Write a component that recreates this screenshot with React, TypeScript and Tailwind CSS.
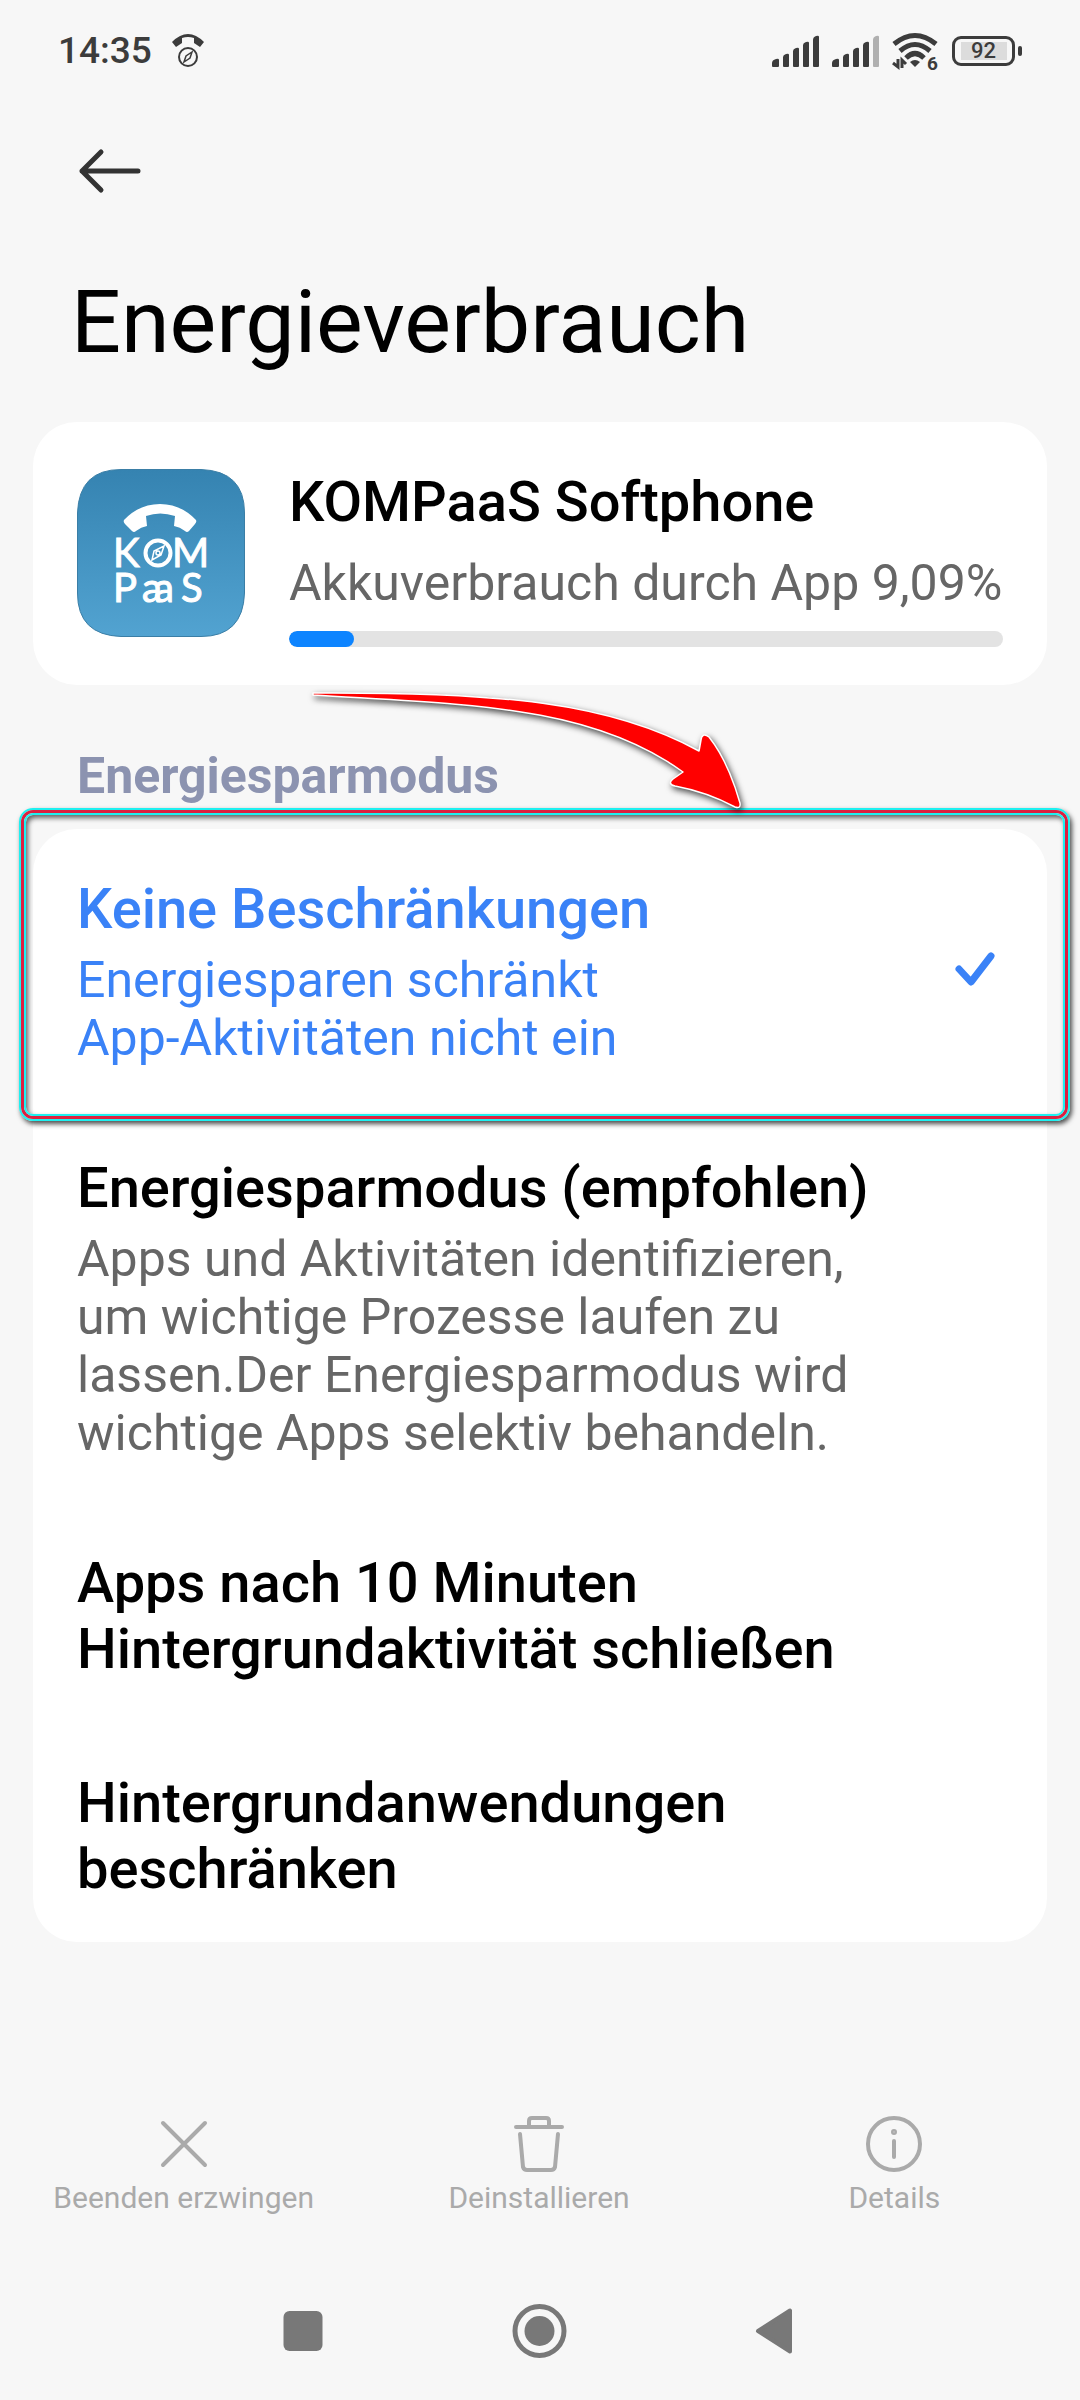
import type { ReactNode } from "react";

interface ModeOption {
  id: string;
  title: string;
  description?: string;
}

const OPTIONS: ModeOption[] = [
  {
    id: "none",
    title: "Keine Beschränkungen",
    description: "Energiesparen schränkt App-Aktivitäten nicht ein",
  },
  {
    id: "saver",
    title: "Energiesparmodus (empfohlen)",
    description:
      "Apps und Aktivitäten identifizieren, um wichtige Prozesse laufen zu lassen.Der Energiesparmodus wird wichtige Apps selektiv behandeln.",
  },
  { id: "close", title: "Apps nach 10 Minuten Hintergrundaktivität schließen" },
  { id: "restrict", title: "Hintergrundanwendungen beschränken" },
];

const SELECTED_ID = "none";
const USAGE_PERCENT = 9.09;

function SignalIcon({ weak = false }: { weak?: boolean }) {
  return (
    <svg aria-hidden="true" className="h-8 w-12" fill="#3c3c3c" viewBox="0 0 48 32">
      <path d="M0 31v-3q0-3 4-4q3-1 3 1v6q0 1-1 1H1q-1 0-1-1z" />
      <path d="M11 31V22q0-2 3-3q3-1 3 1v11q0 1-1 1h-4q-1 0-1-1z" />
      <path d="M21 31V16q0-2 3-3q3-1 3 1v17q0 1-1 1h-4q-1 0-1-1z" />
      <path d="M31 31V10q0-2 3-3q3-1 3 1v23q0 1-1 1h-4q-1 0-1-1z" />
      <path
        d="M41 31V5q0-3 3-4q3-1 3 1v29q0 1-1 1h-4q-1 0-1-1z"
        fill={weak ? "#b0b0b0" : "#3c3c3c"}
      />
    </svg>
  );
}

function WifiIcon() {
  return (
    <svg aria-hidden="true" className="h-10 w-12 overflow-visible" fill="none" viewBox="0 0 48 40">
      <g stroke="#3c3c3c" strokeWidth="5">
        <path d="M2 13Q23-4 44 13" />
        <path d="M8 20Q23 7 38 20" />
        <path d="M14 27Q23 18 32 27" />
      </g>
      <path d="M18 31q5-4 10 0l-5 5z" fill="#3c3c3c" />
      <path d="M6 28v8l-5-4M10 37v-8l4 4" stroke="#3c3c3c" strokeWidth="3" />
      <text
        fill="#3c3c3c"
        fontFamily="Roboto, sans-serif"
        fontSize="19"
        fontWeight="700"
        x="35"
        y="39"
      >
        6
      </text>
    </svg>
  );
}

function StatusBar() {
  return (
    <header className="flex h-[102px] items-center justify-between px-[58px] text-[#3c3c3c]">
      <div className="flex items-center gap-5">
        <span className="text-[37px] leading-[44px] font-medium">14:35</span>
        <svg aria-hidden="true" className="h-9 w-8" viewBox="0 0 32 36">
          <path d="M0 9Q16-7 32 9l-4 5-6-4V5q-6-2-12 0v5l-6 4z" fill="#3c3c3c" />
          <circle cx="16" cy="24" fill="none" r="9" stroke="#3c3c3c" strokeWidth="2" />
          <path
            d="M20 19l-2 6-6 4 2-6z"
            fill="none"
            stroke="#3c3c3c"
            strokeWidth="1.5"
          />
        </svg>
      </div>
      <div className="flex items-center gap-3">
        <SignalIcon />
        <SignalIcon weak />
        <WifiIcon />
        <div className="flex items-center gap-[3px]">
          <div className="flex h-[30px] w-[63px] items-center justify-center rounded-[9px] border-3 border-[#3c3c3c] px-1">
            <span className="w-[46px] bg-[#dcdcdc] text-center text-[22px] leading-[18px] font-medium">
              92
            </span>
          </div>
          <span className="h-[10px] w-1 rounded-sm bg-[#3c3c3c]" />
        </div>
      </div>
    </header>
  );
}

function AppIcon() {
  return (
    <svg aria-hidden="true" className="size-[168px] flex-none" viewBox="0 0 168 168">
      <defs>
        <linearGradient id="app-icon" x1="0" x2="0" y1="0" y2="1">
          <stop offset="0" stopColor="#3583b1" />
          <stop offset="1" stopColor="#52a3d1" />
        </linearGradient>
      </defs>
      <path
        d="M44 0.500H124Q167.500 2 167.500 44V124Q166 167.500 124 167.500H44Q0.500 166 0.500 124V44Q2 0.500 44 0.500Z"
        fill="url(#app-icon)"
        stroke="#3a7ea6"
      />
      <path
        d="M47 51Q62 35 83 35T119 51q1 2-1 4l-6 7q-2 2-4 0-5-4-11-5l1-10q-15-5-29 0l1 10q-6 1-11 5-2 2-4 0l-7-7q-2-2-1-4z"
        fill="#fff"
      />
      <g
        fill="#fff"
        fontFamily="Lato, sans-serif"
        fontSize="40"
        stroke="#fff"
        strokeWidth="1"
      >
        <text x="36" y="98">K</text>
        <text x="95" y="98">M</text>
        <text x="36" y="133">P</text>
        <text x="65" y="133">a</text>
        <text x="77" y="133">a</text>
        <text x="104" y="133">S</text>
      </g>
      <circle cx="81" cy="84" fill="none" r="12.5" stroke="#fff" strokeWidth="4" />
      <path
        d="M87 77l-3 9-9 5 2-9zM79 84a2 2 0 1 0 4 0a2 2 0 1 0-4 0"
        fill="none"
        stroke="#fff"
        strokeWidth="1.500"
      />
    </svg>
  );
}

function UsageCard() {
  return (
    <section className="flex items-start gap-11 rounded-[44px] bg-white px-11 pt-[47px] pb-[38px]">
      <AppIcon />
      <div className="flex flex-1 flex-col gap-[19px]">
        <h2 className="text-[56px] leading-[66px] font-medium">KOMPaaS Softphone</h2>
        <p className="text-[50px] leading-[58px] whitespace-nowrap text-[#666]">
          Akkuverbrauch durch App 9,09%
        </p>
        <div className="h-4 overflow-hidden rounded-full bg-[#e3e3e3]">
          <div
            className="h-full rounded-full bg-[#0d84ff]"
            style={{ width: `${USAGE_PERCENT}%` }}
          />
        </div>
      </div>
    </section>
  );
}

function PointerArrow() {
  return (
    <svg
      aria-hidden="true"
      className="pointer-events-none absolute -top-[164px] left-[257px] z-10 h-[160px] w-[470px] overflow-visible drop-shadow-[2px_3px_3px_rgba(0,0,0,0.7)]"
      viewBox="290 665 470 160"
    >
      <path
        d="M313 693C500 692 610 702 699 751L701 740Q702 732 709 737Q728 761 740 803Q741 809 735 807Q707 792 675 786Q667 784 673 779L683 772C590 705 470 705 313 695Z"
        fill="#f00"
        stroke="#fff"
        strokeLinejoin="round"
        strokeWidth="1.500"
      />
    </svg>
  );
}

function Option({ option }: { option: ModeOption }) {
  const selected = option.id === SELECTED_ID;

  return (
    <li className="px-11 py-11 first:pt-[47px] last:pb-10">
      <button
        aria-pressed={selected}
        className={`flex w-full items-center justify-between text-left ${
          selected ? "text-[#3a82f7]" : "text-black"
        }`}
        type="button"
      >
        <span className="block max-w-[800px]">
          <span className="block text-[56px] leading-[66px] font-medium">{option.title}</span>
          {option.description ? (
            <span
              className={`mt-[9px] block text-[50px] leading-[58px] ${
                selected ? "max-w-[600px]" : "text-[#666]"
              }`}
            >
              {option.description}
            </span>
          ) : null}
        </span>
        {selected ? (
          <svg aria-hidden="true" className="mr-2 h-10 w-10" fill="none" viewBox="0 0 40 40">
            <path
              d="M4 17L16 30L36 4"
              stroke="#3a82f7"
              strokeLinecap="round"
              strokeLinejoin="round"
              strokeWidth="7"
            />
          </svg>
        ) : null}
      </button>
    </li>
  );
}

function ActionButton({ label, children }: { label: string; children: ReactNode }) {
  return (
    <button className="flex flex-1 flex-col items-center gap-1 text-[#aaa]" type="button">
      <svg
        aria-hidden="true"
        className="size-16"
        fill="none"
        stroke="#aaa"
        strokeLinecap="round"
        strokeWidth="4"
        viewBox="0 0 64 64"
      >
        {children}
      </svg>
      <span className="text-[30px] leading-9">{label}</span>
    </button>
  );
}

function App() {
  return (
    <div className="flex min-h-screen flex-col bg-[#f7f7f7] font-['Roboto',sans-serif] text-black">
      <StatusBar />
      <main className="flex-1 px-[33px]">
        <button aria-label="Zurück" className="mt-11 ml-[45px] block" type="button">
          <svg
            aria-hidden="true"
            className="h-12 w-16"
            fill="none"
            stroke="#333"
            strokeLinecap="round"
            strokeLinejoin="round"
            strokeWidth="5"
            viewBox="0 0 64 48"
          >
            <path d="M60 25H4M23 6L4 25L23 44" />
          </svg>
        </button>
        <h1 className="mt-[76px] mb-12 ml-[38px] text-[88px] leading-[104px]">
          Energieverbrauch
        </h1>
        <UsageCard />
        <h3 className="mt-[60px] ml-11 text-[50px] leading-[62px] font-bold text-[#8c93b0]">
          Energiesparmodus
        </h3>
        <div className="relative mt-[22px]">
          <PointerArrow />
          <ul className="rounded-[44px] bg-white">
            {OPTIONS.map((option) => (
              <Option key={option.id} option={option} />
            ))}
          </ul>
          <div className="pointer-events-none absolute -top-[21px] -right-[23px] -left-[14px] h-[313px] rounded-[14px] border-2 border-[#1ef0f0] shadow-[2px_3px_5px_rgba(0,0,0,0.7)]">
            <div className="h-full rounded-[12px] border-3 border-[#dc2040]">
              <div className="h-full rounded-[9px] border-2 border-[#1ef0f0] shadow-[inset_2px_3px_5px_rgba(0,0,0,0.6)]" />
            </div>
          </div>
        </div>
      </main>
      <footer>
        <div className="flex pr-2 pl-1.5">
          <ActionButton label="Beenden erzwingen">
            <path d="M11 11L53 53M53 11L11 53" />
          </ActionButton>
          <ActionButton label="Deinstallieren">
            <path d="M9 15H55M22 14V9Q22 6 25 6H39Q42 6 42 9V14M13 22L16 55Q17 58 20 58H44Q47 58 48 55L51 22" />
          </ActionButton>
          <ActionButton label="Details">
            <circle cx="32" cy="32" r="26" />
            <path d="M32 29V45" />
            <circle cx="32" cy="20" fill="#aaa" r="1" />
          </ActionButton>
        </div>
        <nav className="mt-[87px] flex justify-between px-[283px] pb-[41px]">
          <button aria-label="Letzte Apps" type="button">
            <svg aria-hidden="true" className="size-14" fill="#787878" viewBox="0 0 56 56">
              <rect height="40" rx="6" width="39" x="0.500" y="8" />
            </svg>
          </button>
          <button aria-label="Startbildschirm" type="button">
            <svg aria-hidden="true" className="size-14" fill="none" viewBox="0 0 56 56">
              <circle cx="27.500" cy="28" r="24.500" stroke="#787878" strokeWidth="5" />
              <circle cx="27.500" cy="28" fill="#787878" r="15" />
            </svg>
          </button>
          <button aria-label="Zurück" type="button">
            <svg aria-hidden="true" className="size-14" viewBox="0 0 56 56">
              <path
                d="M49 7.500V48.500L17 28Z"
                fill="#787878"
                stroke="#787878"
                strokeLinejoin="round"
                strokeWidth="4"
              />
            </svg>
          </button>
        </nav>
      </footer>
    </div>
  );
}

export default App;
